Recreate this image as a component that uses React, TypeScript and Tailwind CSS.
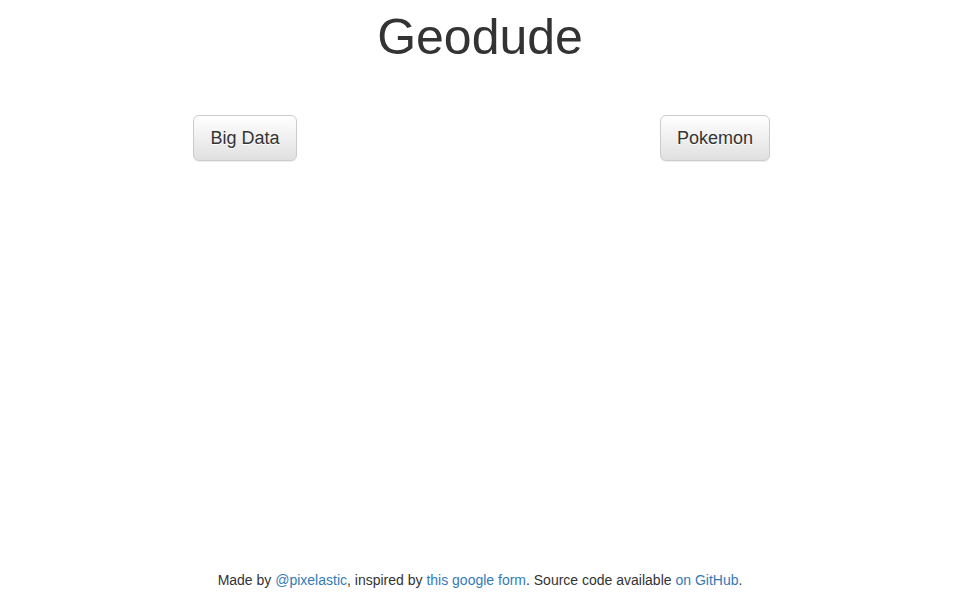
const choices = ["Big Data", "Pokemon"];

export default function App() {
  return (
    <main
      className="flex min-h-screen flex-col bg-white text-[#333]"
      style={{ fontFamily: '"Liberation Sans", Arial, sans-serif' }}
    >
      <header className="pt-[10px] text-center">
        <h1 className="text-[50px] leading-[55px] font-normal">Geodude</h1>
      </header>

      <section className="mx-auto mt-[50px] grid w-[940px] grid-cols-2">
        {choices.map((label) => (
          <div key={label} className="text-center">
            <button className="rounded-[6px] border border-[#ccc] bg-gradient-to-b from-white to-[#e0e0e0] px-4 py-[10px] text-[18px] leading-[24px] text-[#333] shadow-[inset_0_1px_0_rgba(255,255,255,0.15),0_1px_1px_rgba(0,0,0,0.075)] [text-shadow:0_1px_0_#fff]">
              {label}
            </button>
          </div>
        ))}
      </section>

      <footer className="mt-auto pb-[10px] text-center text-[14px] leading-[20px]">
        Made by <a href="#" className="text-[#337ab7]">@pixelastic</a>, inspired by{" "}
        <a href="#" className="text-[#337ab7]">this google form</a>. Source code available{" "}
        <a href="#" className="text-[#337ab7]">on GitHub</a>.
      </footer>
    </main>
  );
}
